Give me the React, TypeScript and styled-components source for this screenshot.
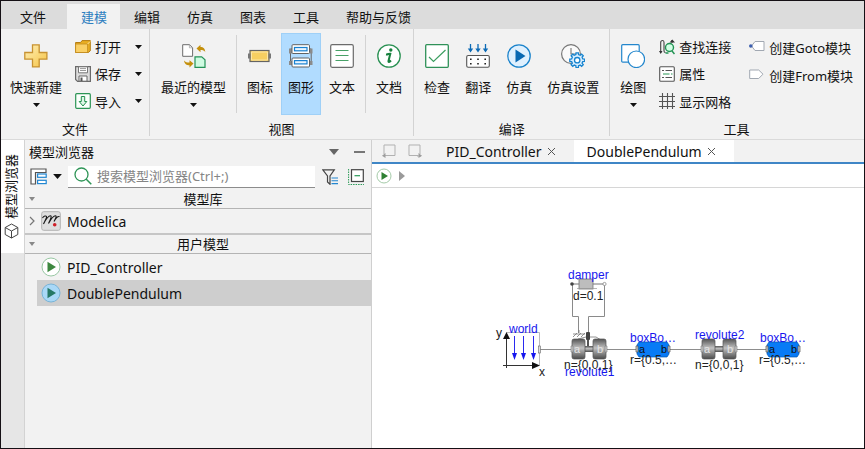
import React from "react";
import styled, { createGlobalStyle, css } from "styled-components";

const GlobalStyle = createGlobalStyle`
  *, *::before, *::after { box-sizing: border-box; }
  body {
    margin: 0;
    background: #fff;
    color: #111;
    font-family: "Noto Sans", "Noto Sans CJK SC", sans-serif;
    font-size: 13px;
  }
  button, input { font: inherit; color: inherit; }
  button { border: 0; padding: 0; background: none; white-space: nowrap; cursor: pointer; }
  svg { display: block; flex: none; }
`;

/* ---------- window ---------- */

const Window = styled.div`
  display: flex;
  flex-direction: column;
  min-height: 100vh;
  border: 1px solid #151015;
  background: #f2f2f2;
`;

const MenuBar = styled.nav`
  display: flex;
  height: 28px;
  padding: 3px 0 0 5px;
  background: #dcdcdc;
`;

const MenuTab = styled.button<{ $active?: boolean }>`
  padding: 0 13px 0 14px;
  line-height: 24px;
  &:first-child { margin-right: 8px; }
  ${(p) => p.$active && css`
    background: #f2f2f2;
    color: #2f80c0;
  `}
`;

/* ---------- ribbon ---------- */

const Ribbon = styled.div`
  display: flex;
  padding-bottom: 3px;
  border-bottom: 1px solid #dadada;
`;

const Group = styled.section<{ $grow?: boolean; $pad?: number }>`
  display: flex;
  flex-direction: column;
  flex: ${(p) => (p.$grow ? "1" : "none")};
  padding: 4px ${(p) => p.$pad ?? 3}px 0;
  border-right: 1px solid ${(p) => (p.$grow ? "transparent" : "#d3d3d3")};
`;

const GroupBody = styled.div`
  display: flex;
  height: 82px;
  gap: 1px;
`;

const GroupTitle = styled.h2`
  margin: 7px 0 0;
  font-size: 13px;
  font-weight: 400;
  line-height: 14px;
  text-align: center;
`;

const BigButton = styled.button<{ $active?: boolean }>`
  display: flex;
  flex-direction: column;
  align-items: center;
  padding: 11px 7px 0;
  ${(p) => p.$active && css`
    background: #b1dcff;
    box-shadow: inset 0 0 0 1px #9fd0f7;
  `}
`;

const BigLabel = styled.span`
  margin: 9px 0 6px;
  line-height: 20px;
`;

const Divider = styled.div`
  width: 1px;
  height: 78px;
  margin: 2px 2px 0;
  background: #d3d3d3;
`;

const ToolColumn = styled.div`
  display: flex;
  flex-direction: column;
  padding-left: 5px;
`;

const ToolRow = styled.div`
  display: flex;
  height: 28px;
`;

const ToolButton = styled.button`
  display: flex;
  align-items: center;
  gap: 4px;
`;

const DropButton = styled.button`
  display: grid;
  place-items: center;
  width: 18px;
  margin-left: 8px;
`;

const SecondColumn = styled(ToolColumn)`
  padding-left: 17px;
`;

/* ---------- work area ---------- */

const Work = styled.div`
  display: flex;
  flex: 1;
`;

const SideStrip = styled.div`
  width: 24px;
  flex: none;
  border-right: 1px solid #d3d3d3;
  background: #e6e6e6;
`;

const SideTab = styled.button`
  display: flex;
  flex-direction: column;
  align-items: center;
  gap: 4px;
  width: 23px;
  height: 113px;
  padding-top: 14px;
  padding-right: 3px;
  background: #fff;
`;

const SideText = styled.span`
  writing-mode: vertical-rl;
  text-orientation: sideways;
  transform: rotate(180deg);
  line-height: 18px;
`;

const Browser = styled.aside`
  display: flex;
  flex-direction: column;
  flex: none;
  width: 347px;
  border-right: 1px solid #cfcfcf;
`;

const BrowserHead = styled.header`
  display: flex;
  align-items: center;
  gap: 13px;
  height: 25px;
  padding: 0 6px 2px 4px;
`;

const BrowserTitle = styled.h2`
  flex: 1;
  margin: 0;
  font-size: 13px;
  font-weight: 400;
`;

const BrowserTools = styled.div`
  display: flex;
  align-items: center;
  height: 25px;
  padding: 0 2px 2px 5px;
`;

const ModeButton = styled.button`
  display: flex;
  align-items: center;
  gap: 6px;
  margin-right: 6px;
`;

const SearchBox = styled.label`
  display: flex;
  align-items: center;
  flex: 1;
  gap: 5px;
  height: 22px;
  margin-right: 2px;
  padding-left: 6px;
  border-bottom: 1px solid #8c8c8c;
  background: #fff;
`;

const SearchInput = styled.input`
  flex: 1;
  min-width: 0;
  padding: 0;
  border: 0;
  outline: 0;
  background: none;
  &::placeholder { color: #858585; opacity: 1; }
`;

const IconButton = styled.button`
  display: grid;
  place-items: center;
  width: 26px;
  height: 22px;
  flex: none;
`;

const NarrowIconButton = styled(IconButton)`
  width: 12px;
`;

const SectionHead = styled.button`
  display: flex;
  align-items: center;
  width: 100%;
  height: 19px;
  padding: 0 0 0 4px;
  border-bottom: 1px solid #b4b4b4;
`;

const SectionName = styled.span`
  flex: 1;
  line-height: 18px;
`;

const Tree = styled.ul<{ $lined?: boolean }>`
  margin: 0;
  padding: 0;
  list-style: none;
  border-bottom: ${(p) => (p.$lined ? "2px solid #c6c6c6" : "0")};
`;

const TreeItem = styled.button<{ $selected?: boolean; $indent?: boolean }>`
  display: flex;
  align-items: center;
  gap: 6px;
  width: ${(p) => (p.$indent ? "calc(100% - 12px)" : "100%")};
  height: ${(p) => (p.$indent ? "26px" : "24px")};
  margin-left: ${(p) => (p.$indent ? "12px" : "0")};
  padding-left: 4px;
  background: ${(p) => (p.$selected ? "#cecece" : "transparent")};
  font-size: 14px;
`;

/* ---------- editor ---------- */

const Editor = styled.main`
  display: flex;
  flex-direction: column;
  flex: 1;
  min-width: 0;
  background: #fff;
`;

const EditorTabs = styled.div`
  display: flex;
  height: 24px;
  border-bottom: 2px solid #3f86c6;
  background: #f2f2f2;
`;

const NavButtons = styled.div`
  display: flex;
  width: 61px;
  padding-left: 4px;
`;

const EditorTab = styled.div<{ $active?: boolean }>`
  display: flex;
  align-items: center;
  gap: 5px;
  padding: 0 18px 0 13px;
  background: ${(p) => (p.$active ? "#fff" : "transparent")};
  font-size: 14px;
`;

const PathBar = styled.div`
  display: flex;
  align-items: center;
  gap: 4px;
  height: 24px;
  padding-left: 4px;
  border-bottom: 1px solid #d6d6d6;
`;

const Canvas = styled.div`
  flex: 1;
  padding: 72px 0 0 118px;
  overflow: hidden;
`;

/* ---------- icons ---------- */

const Big = ({ children }: { children: React.ReactNode }) => (
  <svg width="24" height="24" viewBox="0 0 24 24" fill="none" aria-hidden="true">{children}</svg>
);
const Small = ({ children }: { children: React.ReactNode }) => (
  <svg width="16" height="16" viewBox="0 0 16 16" fill="none" aria-hidden="true">{children}</svg>
);

const Caret = ({ wide }: { wide?: boolean }) => (
  <svg width={wide ? 9 : 7} height={wide ? 5 : 4} viewBox="0 0 7 4" aria-hidden="true"><path d="M0 0h7L3.5 4z" fill="#111" /></svg>
);

const PlusIcon = () => (
  <Big>
    <defs>
      <linearGradient id="gold" x1="0" y1="0" x2="1" y2="1">
        <stop offset="0" stopColor="#fff0b8" /><stop offset="1" stopColor="#f5c344" />
      </linearGradient>
    </defs>
    <path d="M8.5.8h6.7v7.7h7.7v6.7h-7.7v7.7H8.5v-7.7H.8V8.500h7.7z" fill="url(#gold)" stroke="#c79232" strokeWidth="1.300" />
  </Big>
);

const FolderIcon = () => (
  <Small>
    <path d="M.6 13.500V3.500h5L7 1.600h8.300v10.200l-2 1.700z" fill="#e9ae22" stroke="#b57d13" />
    <path d="M.6 5h12v8.500H.6z" fill="#fad066" stroke="#c18a1d" strokeWidth=".8" />
    <path d="M12.600 5l2.500-2.500" stroke="#fbe3a0" />
  </Small>
);

const SaveIcon = () => (
  <Small>
    <path d="M.6.6h14.800v14.800H2.600l-2-2z" fill="#dcdcdc" stroke="#6a6a6a" strokeWidth="1.200" />
    <path d="M3.500.8h9v6h-9z" fill="#fff" stroke="#777" />
    <path d="M5 2.600h6M5 4.500h6" stroke="#999" />
    <path d="M4 10h8v5.200H4z" fill="#fff" stroke="#666" />
    <path d="M5.500 11.500h2V15h-2z" fill="#555" />
  </Small>
);

const ImportIcon = () => (
  <Small>
    <rect x=".7" y=".7" width="14.600" height="14.600" rx="1" fill="#fbfffc" stroke="#2c9455" strokeWidth="1.200" />
    <path d="M6.300 3.500h3.400v5h2.100L8 13 4.200 8.500h2.100z" fill="#dff5e7" stroke="#23904e" />
  </Small>
);

const RecentIcon = () => (
  <Big>
    <path d="M.7.7h6.700l3.200 3v8.600H.7z" fill="#fff" stroke="#6d6d6d" />
    <path d="M7.400.8v3h3" stroke="#999" strokeWidth=".7" />
    <path d="M13 12.800h6.700l3.300 3v7.500H13z" fill="#cffbe2" stroke="#249257" strokeWidth="1.200" />
    <path d="M14.500 4.500L18.500.8v2.300c3 0 4.500 1.500 4.800 5.200-1.200-1.800-2.300-2.200-4.800-2.200v2.200z" fill="#c4900d" />
    <path d="M11.500 19.600L7.500 23.500v-2.200c-3 0-5-1.300-5.500-4.800 1.500 1.800 2.800 2 5.500 2v-2.300z" fill="#c4900d" />
  </Big>
);

const IconViewIcon = () => (
  <Big>
    <rect x="2" y="6.500" width="19" height="11" fill="#f6cf61" stroke="#646464" strokeWidth="1.200" />
    <path d="M3.500 8h16v8h-16z" stroke="#fbe6a7" />
    <path d="M0 9.500h2.500v5H0zM20.500 9.500H23v5h-2.500z" fill="#777" />
  </Big>
);

const DiagramViewIcon = () => (
  <Big>
    <path d="M3.500 5H1.500v13.500h2M19.500 5h2.700v13.500h-2.700" stroke="#666" />
    <path d="M0 4.500h3v5H0zM20.500 4.500h3v5h-3zM0 17h3v4H0zM20.500 17h3v4h-3z" fill="#8b8b8b" />
    <rect x="3" y=".7" width="17.500" height="8.800" rx="1" fill="#fff" stroke="#626262" />
    <rect x="5.500" y="3.500" width="12.500" height="3.300" fill="#eaf5ff" stroke="#1981d0" strokeWidth="1.200" />
    <rect x="3" y="14" width="17.500" height="9" rx="1" fill="#fff" stroke="#626262" />
    <rect x="5.500" y="16.600" width="12.500" height="3.300" fill="#eaf5ff" stroke="#1981d0" strokeWidth="1.200" />
  </Big>
);

const TextViewIcon = () => (
  <Big>
    <rect x=".7" y=".7" width="22.600" height="22.600" rx="1.500" fill="#fff" stroke="#6b6b6b" strokeWidth="1.200" />
    <path d="M5.500 6.500h13M5.500 11.500h13M5.500 16.500h13" stroke="#47a167" strokeWidth="1.100" />
  </Big>
);

const DocIcon = () => (
  <Big>
    <circle cx="12" cy="12" r="11.200" fill="#fff" stroke="#2a9153" strokeWidth="1.300" />
    <circle cx="13.800" cy="6" r="1.700" fill="#18813e" />
    <path d="M9 10.500c1.800.2 3-1 4.300-.8L11.500 17c-.3 1.400.8 1.200 2.500-.5" stroke="#18813e" strokeWidth="2" />
  </Big>
);

const CheckIcon = () => (
  <Big>
    <rect x=".7" y=".7" width="22.600" height="22.600" rx="1" fill="#fff" stroke="#2f9158" strokeWidth="1.300" />
    <path d="M4 13l4.500 4.500L20.500 6" stroke="#3c9e60" strokeWidth="1.200" />
  </Big>
);

const TranslateIcon = () => (
  <Big>
    <path d="M4.500 0v7M12 0v7M19.500 0v7" stroke="#0d6bb6" strokeWidth="1.300" />
    <path d="M1.800 4.500h5.400L4.500 8.500zM9.300 4.500h5.400L12 8.500zM16.800 4.500h5.400l-2.700 4z" fill="#0d6bb6" />
    <rect x=".7" y="11.500" width="22.600" height="11.800" rx="1.500" fill="#fff" stroke="#555" strokeWidth="1.100" />
    <path d="M4 14.500h1.600v1.600H4zM11.200 14.500h1.600v1.600h-1.600zM18.400 14.500H20v1.600h-1.600zM4 19h1.600v1.600H4zM11.200 19h1.600v1.600h-1.600zM18.400 19H20v1.600h-1.600z" fill="#222" />
  </Big>
);

const RunIcon = () => (
  <Big>
    <circle cx="12" cy="12" r="11.200" fill="#dff0fe" stroke="#1b83cb" strokeWidth="1.300" />
    <path d="M8.500 5.500v13L18.500 12z" fill="#0868b2" />
  </Big>
);

const gearPath = (cx: number, cy: number, inner: number, outer: number, teeth: number) => {
  const step = (Math.PI * 2) / teeth;
  const pts: string[] = [];
  for (let i = 0; i < teeth; i++) {
    [[-0.3, inner], [-0.2, outer], [0.2, outer], [0.3, inner]].forEach(([t, r]) => {
      const a = (i + t) * step;
      pts.push(`${(cx + Math.cos(a) * r).toFixed(2)} ${(cy + Math.sin(a) * r).toFixed(2)}`);
    });
  }
  return `M${pts.join("L")}z`;
};

const RunSettingsIcon = () => (
  <Big>
    <circle cx="10" cy="10" r="9.400" fill="#fafafa" stroke="#777" strokeWidth="1.200" />
    <path d="M10 4v6h5" stroke="#777" strokeWidth="1.100" />
    <path d={gearPath(16.200, 16.200, 5.700, 7.500, 8)} fill="#d8eeff" stroke="#1784cf" strokeWidth="1.300" />
    <circle cx="16.200" cy="16.200" r="2.700" fill="#fff" stroke="#1784cf" strokeWidth="1.300" />
  </Big>
);

const DrawIcon = () => (
  <Big>
    <rect x=".7" y=".7" width="17.500" height="17.500" rx="1" fill="#fff" stroke="#2487cd" strokeWidth="1.200" />
    <circle cx="15.300" cy="15.300" r="8.300" fill="#fff" stroke="#2487cd" strokeWidth="1.200" />
  </Big>
);

const FindLinkIcon = () => (
  <Small>
    <path d="M1.700 14V3.500c0-1.700 1.200-2 2-2s1.300.8 1.300 2V12c0 1 .5 1.500 1.500 1.500M13 1v3" stroke="#444" strokeWidth="1.100" />
    <path d="M10.500 3.500L13.300.5 16 3.500zM0 12h3.500l-1.800 3z" fill="#333" />
    <circle cx="10.500" cy="8.500" r="4" fill="#d2ffe5" stroke="#219353" strokeWidth="1.400" />
    <path d="M13 12l2.500 3M6.500 14h3" stroke="#219353" strokeWidth="1.500" />
  </Small>
);

const PropertyIcon = () => (
  <Small>
    <rect x=".7" y=".7" width="14.600" height="14.600" rx="1" fill="#fff" stroke="#555" strokeWidth="1.100" />
    <path d="M3 4.500h2M3 11.500h2M6.500 4.500H13M6.500 11.500H13" stroke="#555" />
    <path d="M4 8h6.500M12 8h1.500" stroke="#2b9857" strokeWidth="1.200" />
  </Small>
);

const GridIcon = () => (
  <Small>
    <path d="M3.500 0v16M8.500 0v16M13.500 0v16M0 3.500h16M0 8.500h16M0 13.500h16" stroke="#555" strokeWidth="1.100" />
  </Small>
);

const GotoIcon = () => (
  <Small>
    <path d="M15 2.500H6L2.500 7 6 11.500h9z" fill="#fff" stroke="#a1a8b2" />
    <circle cx="1.800" cy="7" r="1.800" fill="#3d5fae" />
  </Small>
);

const FromIcon = () => (
  <Small>
    <path d="M.7 3h9L14 7.200 9.700 11.500h-9z" fill="#fff" stroke="#a1a8b2" />
  </Small>
);

const CubeIcon = () => (
  <svg width="15" height="16" viewBox="0 0 15 16" fill="none" aria-hidden="true">
    <path d="M7.500 1l6.300 3.500v7L7.500 15l-6.300-3.500v-7zM1.200 4.500l6.300 3.500 6.300-3.500M7.500 8v7" stroke="#444" />
  </svg>
);

const TreeModeIcon = () => (
  <svg width="17" height="17" viewBox="0 0 17 17" fill="none" aria-hidden="true">
    <path d="M1 16V1h15v3.500H5.500V16z" fill="#fff" stroke="#555" strokeWidth="1.200" />
    <rect x="7.600" y="6" width="8.600" height="3.300" fill="#fff" stroke="#2187d2" strokeWidth="1.200" />
    <rect x="7.600" y="12.300" width="8.600" height="3.300" fill="#fff" stroke="#2187d2" strokeWidth="1.200" />
  </svg>
);

const SearchIcon = () => (
  <svg width="18" height="18" viewBox="0 0 18 18" fill="none" aria-hidden="true">
    <circle cx="7.500" cy="7.500" r="6.500" stroke="#2f9557" strokeWidth="1.300" />
    <path d="M12 12l5.300 5.300" stroke="#2f9557" strokeWidth="1.500" />
  </svg>
);

const FilterIcon = () => (
  <Small>
    <path d="M.8.8h11.500L8 7v8.300L5.500 13V7z" stroke="#444" strokeWidth="1.200" />
    <path d="M9.500 9H16M9.500 11.800H16M9.500 14.600H16" stroke="#2386d0" strokeWidth="1.100" />
  </Small>
);

const CollapseIcon = () => (
  <Small>
    <rect x="3.500" y=".7" width="11.800" height="11.800" fill="#fff" stroke="#444" strokeWidth="1.200" />
    <path d="M6.500 6.700h5.500" stroke="#2a9a58" strokeWidth="1.200" />
    <path d="M.6 0v15.500H16" stroke="#2a9a58" strokeDasharray="1.500 1" />
  </Small>
);

const FoldArrow = () => (
  <svg width="6" height="4" viewBox="0 0 6 4" aria-hidden="true"><path d="M0 0h6L3 4z" fill="#888" /></svg>
);

const ChevronIcon = () => (
  <svg width="6" height="10" viewBox="0 0 6 10" fill="none" aria-hidden="true"><path d="M1 1l4 4-4 4" stroke="#777" strokeWidth="1.200" /></svg>
);

const ModelicaIcon = () => (
  <svg width="20" height="20" viewBox="0 0 20 20" fill="none" aria-hidden="true">
    <rect x=".7" y=".7" width="18.600" height="18.600" rx="2" fill="#dedede" stroke="#b2b2b2" />
    <path d="M1.500 7C3 4.800 5 4.500 5.500 5.500S4 9.500 2.500 13C5 8 7.500 4.800 9.500 4.800c1.500 0 .3 3.200-2 7.700C10 8 12.500 4.800 14.500 4.800c1.500 0 0 3-1.500 5.700C14.500 7.500 16.500 5.200 18.500 5.500" stroke="#171717" strokeWidth="1.100" />
    <circle cx="13.700" cy="13.700" r="1.800" fill="#cf1f28" />
  </svg>
);

const ModelIcon = ({ selected }: { selected?: boolean }) => (
  <svg width="20" height="20" viewBox="0 0 20 20" aria-hidden="true">
    <circle cx="10" cy="10" r="9" fill={selected ? "#a9d8f7" : "#fff"} stroke={selected ? "#78b4d8" : "#98c7a3"} />
    <path d="M6.500 4.800v10.400L15 10z" fill={selected ? "#257866" : "#3d8840"} />
  </svg>
);

const CloseIcon = () => (
  <svg width="9" height="9" viewBox="0 0 9 9" aria-hidden="true"><path d="M1 1l7 7M8 1L1 8" stroke="#555" /></svg>
);

const NavIcon = ({ forward }: { forward?: boolean }) => (
  <svg width="14" height="14" viewBox="0 0 14 14" fill="none" aria-hidden="true">
    {forward ? (
      <g><path d="M9 12H13M1 11.500V1h11v9M1 11.500h9" stroke="#b1b1b1" /><path d="M10.500 9l3.500 2.700-3.500 2.300z" fill="#9d9d9d" /></g>
    ) : (
      <g><path d="M2 4V1h11v10.500H3M2 4v6" stroke="#b1b1b1" /><path d="M3.500 9L0 11.700 3.500 14z" fill="#9d9d9d" /></g>
    )}
  </svg>
);

const Joint = ({ x }: { x: number }) => (
  <g>
    <rect x={x + 12} y="346" width="12" height="6" fill="url(#steel)" />
    <rect x={x} y="339" width="13" height="20" rx="2" fill="url(#steel)" stroke="#555" strokeWidth=".7" />
    <rect x={x + 21} y="339" width="13" height="20" rx="2" fill="url(#steel)" stroke="#555" strokeWidth=".7" />
    <path d={`M${x - 1} 346h2v6h-2zM${x + 33} 346h2v6h-2z`} fill="#ccc" stroke="#777" strokeWidth=".6" />
    <text x={x + 2} y="353" fontSize="11" fill="#e5e5e5">a</text>
    <text x={x + 25} y="353" fontSize="11" fill="#e5e5e5">b</text>
  </g>
);

const Body = ({ x }: { x: number }) => (
  <g>
    <path d={`M${x + 3} 342h28l2 3v9l-2 3H${x + 3}l-2-3v-9z`} fill="#087bf6" stroke="#0758b0" strokeWidth=".7" />
    <path d={`M${x} 346h2v6h-2zM${x + 32} 346h2v6h-2z`} fill="#ccc" stroke="#555" strokeWidth=".7" />
    <text x={x + 3} y="353" fontSize="11" fill="#111">a</text>
    <text x={x + 25} y="353" fontSize="11" fill="#111">b</text>
  </g>
);

const Diagram = () => (
  <svg width="320" height="130" viewBox="490 260 320 130" fill="none" fontFamily="'Liberation Sans', Arial, sans-serif" role="img" aria-label="DoublePendulum">
    <defs>
      <linearGradient id="steel" x1="0" y1="0" x2="0" y2="1">
        <stop offset="0" stopColor="#555" /><stop offset=".45" stopColor="#c2c2c2" /><stop offset="1" stopColor="#4b4b4b" />
      </linearGradient>
    </defs>
    <path d="M539 349.500h32M606 349.500h30M669 349.500h32M735 349.500h31" stroke="#8d8d8d" />
    <path d="M572.500 284v32.500h6V333M604.500 284v32.500h-16V334" stroke="#8a8a8a" />
    <path d="M572 284h32" stroke="#777" />
    <rect x="579" y="279" width="14" height="10" fill="#bdbdbd" stroke="#777" strokeWidth=".8" />
    <path d="M577 288.500h20M577 279.500h16" stroke="#999" strokeWidth=".7" />
    <circle cx="572" cy="284" r="1.800" fill="#444" />
    <circle cx="604.500" cy="284" r="1.600" fill="#fff" stroke="#888" strokeWidth=".8" />

    <path d="M506.500 332.500h33v33" stroke="#aaa" strokeWidth=".8" />
    <path d="M506.500 368v-31M503 365.500h30" stroke="#333" />
    <path d="M506.500 332l3.500 7h-7zM540 365.500l-8-3.500v7z" fill="#111" />
    <path d="M514.500 336v20M523.500 336v20M533.500 336v20" stroke="#2a2af0" />
    <path d="M512 353h5l-2.500 7zM521 353h5l-2.500 7zM531 353h5l-2.500 7z" fill="#1717ee" />
    <rect x="538.500" y="346" width="2" height="7" fill="#ddd" stroke="#666" strokeWidth=".6" />

    <path d="M573 337l4-4M577 337l4-4M581 337l4-4M573 334h12M579 333v-3M578 339l8-2h10l5 3" stroke="#777" strokeWidth=".8" />
    <rect x="586" y="332" width="4" height="8" rx="1" fill="#444" />
    <path d="M588 340v7" stroke="#555" strokeWidth="2" />
    <Joint x={572} />
    <Body x={636} />
    <Joint x={702} />
    <Body x={766} />

    <g fontSize="12" fill="#1717ee">
      <text x="568" y="279">damper</text>
      <text x="509" y="333">world</text>
      <text x="565" y="376">revolute1</text>
      <text x="630" y="342">boxBo…</text>
      <text x="695" y="339">revolute2</text>
      <text x="760" y="342">boxBo…</text>
    </g>
    <g fontSize="12" fill="#222">
      <text x="573" y="300">d=0.1</text>
      <text x="496" y="337">y</text>
      <text x="539" y="376">x</text>
      <text x="564" y="369">n={"{0,0,1}"}</text>
      <text x="630" y="364">r={"{0.5,…"}</text>
      <text x="695" y="369">n={"{0,0,1}"}</text>
      <text x="759" y="364">r={"{0.5,…"}</text>
    </g>
  </svg>
);

/* ---------- composed parts ---------- */

type BigProps = { icon: React.ReactNode; label: string; active?: boolean; menu?: boolean };
const Command = ({ icon, label, active, menu }: BigProps) => (
  <BigButton $active={active} aria-haspopup={menu ? "menu" : undefined}>
    {icon}
    <BigLabel>{label}</BigLabel>
    {menu && <Caret />}
  </BigButton>
);

const Tool = ({ icon, label, menu }: Omit<BigProps, "active">) => (
  <ToolRow>
    <ToolButton>{icon}{label}</ToolButton>
    {menu && <DropButton aria-label={label} aria-haspopup="menu"><Caret /></DropButton>}
  </ToolRow>
);

const menus = ["文件", "建模", "编辑", "仿真", "图表", "工具", "帮助与反馈"];

export default function App() {
  return (
    <>
      <GlobalStyle />
      <Window>
        <MenuBar>
          {menus.map((m) => <MenuTab key={m} $active={m === "建模"}>{m}</MenuTab>)}
        </MenuBar>

        <Ribbon>
          <Group $pad={2}>
            <GroupBody>
              <Command icon={<PlusIcon />} label="快速新建" menu />
              <ToolColumn>
                <Tool icon={<FolderIcon />} label="打开" menu />
                <Tool icon={<SaveIcon />} label="保存" menu />
                <Tool icon={<ImportIcon />} label="导入" menu />
              </ToolColumn>
            </GroupBody>
            <GroupTitle>文件</GroupTitle>
          </Group>
          <Group $pad={4}>
            <GroupBody>
              <Command icon={<RecentIcon />} label="最近的模型" menu />
              <Divider />
              <Command icon={<IconViewIcon />} label="图标" />
              <Command icon={<DiagramViewIcon />} label="图形" active />
              <Command icon={<TextViewIcon />} label="文本" />
              <Divider />
              <Command icon={<DocIcon />} label="文档" />
            </GroupBody>
            <GroupTitle>视图</GroupTitle>
          </Group>
          <Group>
            <GroupBody>
              <Command icon={<CheckIcon />} label="检查" />
              <Command icon={<TranslateIcon />} label="翻译" />
              <Command icon={<RunIcon />} label="仿真" />
              <Command icon={<RunSettingsIcon />} label="仿真设置" />
            </GroupBody>
            <GroupTitle>编译</GroupTitle>
          </Group>
          <Group $grow>
            <GroupBody>
              <Command icon={<DrawIcon />} label="绘图" menu />
              <ToolColumn>
                <Tool icon={<FindLinkIcon />} label="查找连接" />
                <Tool icon={<PropertyIcon />} label="属性" />
                <Tool icon={<GridIcon />} label="显示网格" />
              </ToolColumn>
              <SecondColumn>
                <Tool icon={<GotoIcon />} label="创建Goto模块" />
                <Tool icon={<FromIcon />} label="创建From模块" />
              </SecondColumn>
            </GroupBody>
            <GroupTitle>工具</GroupTitle>
          </Group>
        </Ribbon>

        <Work>
          <SideStrip>
            <SideTab>
              <SideText>模型浏览器</SideText>
              <CubeIcon />
            </SideTab>
          </SideStrip>

          <Browser>
            <BrowserHead>
              <BrowserTitle>模型浏览器</BrowserTitle>
              <NarrowIconButton aria-label="菜单">
                <svg width="10" height="6" viewBox="0 0 10 6"><path d="M0 0h10L5 6z" fill="#666" /></svg>
              </NarrowIconButton>
              <NarrowIconButton aria-label="最小化">
                <svg width="11" height="2" viewBox="0 0 11 2"><path d="M0 0h11v2H0z" fill="#777" /></svg>
              </NarrowIconButton>
            </BrowserHead>
            <BrowserTools>
              <ModeButton aria-label="显示方式"><TreeModeIcon /><Caret wide /></ModeButton>
              <SearchBox>
                <SearchIcon />
                <SearchInput type="text" aria-label="搜索模型浏览器" placeholder="搜索模型浏览器(Ctrl+;)" />
              </SearchBox>
              <IconButton aria-label="过滤"><FilterIcon /></IconButton>
              <IconButton aria-label="折叠"><CollapseIcon /></IconButton>
            </BrowserTools>
            <SectionHead><FoldArrow /><SectionName>模型库</SectionName></SectionHead>
            <Tree $lined>
              <li><TreeItem><ChevronIcon /><ModelicaIcon />Modelica</TreeItem></li>
            </Tree>
            <SectionHead><FoldArrow /><SectionName>用户模型</SectionName></SectionHead>
            <Tree>
              <li><TreeItem $indent><ModelIcon />PID_Controller</TreeItem></li>
              <li><TreeItem $indent $selected><ModelIcon selected />DoublePendulum</TreeItem></li>
            </Tree>
          </Browser>

          <Editor>
            <EditorTabs>
              <NavButtons>
                <IconButton aria-label="后退"><NavIcon /></IconButton>
                <IconButton aria-label="前进"><NavIcon forward /></IconButton>
              </NavButtons>
              <EditorTab><button>PID_Controller</button><button aria-label="关闭 PID_Controller"><CloseIcon /></button></EditorTab>
              <EditorTab $active><button>DoublePendulum</button><button aria-label="关闭 DoublePendulum"><CloseIcon /></button></EditorTab>
            </EditorTabs>
            <PathBar>
              <svg width="16" height="16" viewBox="0 0 16 16" aria-hidden="true">
                <circle cx="8" cy="8" r="7" fill="#fff" stroke="#a5cba9" />
                <path d="M5.500 4v8L12 8z" fill="#2e8033" />
              </svg>
              <NarrowIconButton aria-label="展开">
                <svg width="6" height="10" viewBox="0 0 6 10"><path d="M0 0v10l6-5z" fill="#9a9a9a" /></svg>
              </NarrowIconButton>
            </PathBar>
            <Canvas><Diagram /></Canvas>
          </Editor>
        </Work>
      </Window>
    </>
  );
}
